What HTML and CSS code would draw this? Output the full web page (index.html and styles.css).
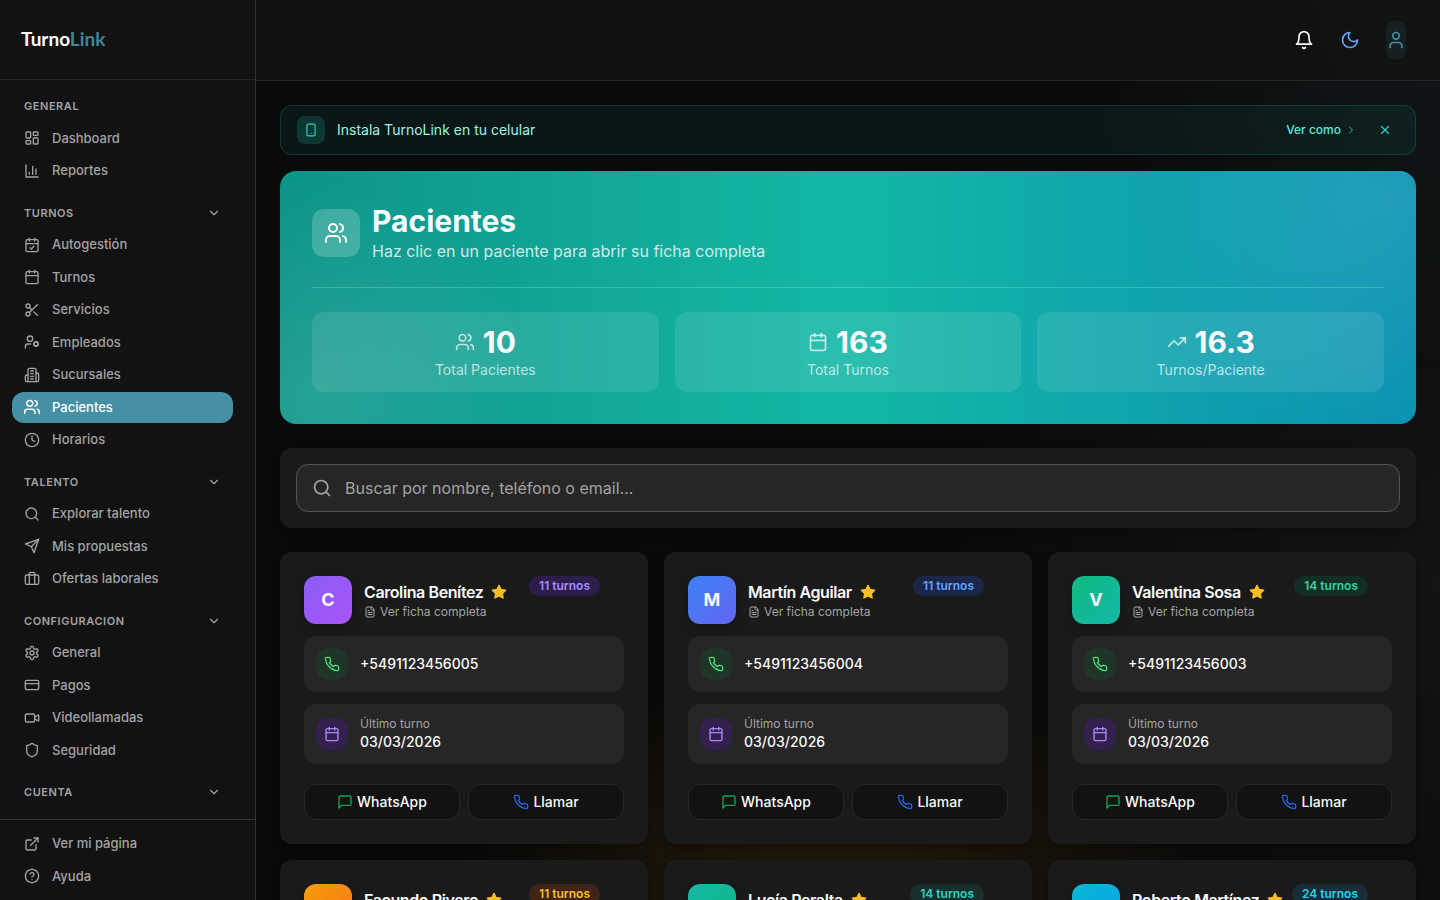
FILE: index.html
```html
<!DOCTYPE html>
<html lang="es">
<head>
  <meta charset="UTF-8">
  <meta name="viewport" content="width=device-width, initial-scale=1.0">
  <link rel="stylesheet" href="styles.css">
  <title>Pacientes - TurnoLink</title>
</head>
<body>
  <!-- Icon sprite -->
  <svg class="sprite" aria-hidden="true">
    <symbol id="dashboard" viewBox="0 0 24 24"><rect width="7" height="9" x="3" y="3" rx="1"/><rect width="7" height="5" x="14" y="3" rx="1"/><rect width="7" height="9" x="14" y="12" rx="1"/><rect width="7" height="5" x="3" y="16" rx="1"/></symbol>
    <symbol id="chart" viewBox="0 0 24 24"><path d="M3 3v18h18"/><path d="M18 17V9"/><path d="M13 17V5"/><path d="M8 17v-3"/></symbol>
    <symbol id="calendar" viewBox="0 0 24 24"><path d="M8 2v4"/><path d="M16 2v4"/><rect width="18" height="18" x="3" y="4" rx="2"/><path d="M3 10h18"/></symbol>
    <symbol id="calendar-check" viewBox="0 0 24 24"><path d="M8 2v4"/><path d="M16 2v4"/><rect width="18" height="18" x="3" y="4" rx="2"/><path d="M3 10h18"/><path d="m9 16 2 2 4-4"/></symbol>
    <symbol id="scissors" viewBox="0 0 24 24"><circle cx="6" cy="6" r="3"/><path d="M8.12 8.12 12 12"/><path d="M20 4 8.12 15.88"/><circle cx="6" cy="18" r="3"/><path d="M14.8 14.8 20 20"/></symbol>
    <symbol id="user-cog" viewBox="0 0 24 24"><circle cx="18" cy="15" r="3"/><circle cx="9" cy="7" r="4"/><path d="M10 15H6a4 4 0 0 0-4 4v2"/><path d="m21.7 16.4-.9-.3"/><path d="m15.2 13.9-.9-.3"/><path d="m16.6 18.7.3-.9"/><path d="m19.1 12.2.3-.9"/><path d="m19.6 18.7-.4-1"/><path d="m16.8 12.3-.4-1"/><path d="m14.3 16.6 1-.4"/><path d="m20.7 13.8 1-.4"/></symbol>
    <symbol id="building" viewBox="0 0 24 24"><path d="M6 22V4a2 2 0 0 1 2-2h8a2 2 0 0 1 2 2v18Z"/><path d="M6 12H4a2 2 0 0 0-2 2v6a2 2 0 0 0 2 2h2"/><path d="M18 9h2a2 2 0 0 1 2 2v9a2 2 0 0 1-2 2h-2"/><path d="M10 6h4"/><path d="M10 10h4"/><path d="M10 14h4"/><path d="M10 18h4"/></symbol>
    <symbol id="users" viewBox="0 0 24 24"><path d="M16 21v-2a4 4 0 0 0-4-4H6a4 4 0 0 0-4 4v2"/><circle cx="9" cy="7" r="4"/><path d="M22 21v-2a4 4 0 0 0-3-3.87"/><path d="M16 3.13a4 4 0 0 1 0 7.75"/></symbol>
    <symbol id="clock" viewBox="0 0 24 24"><circle cx="12" cy="12" r="10"/><path d="M12 6v6l4 2"/></symbol>
    <symbol id="search" viewBox="0 0 24 24"><circle cx="11" cy="11" r="8"/><path d="m21 21-4.3-4.3"/></symbol>
    <symbol id="send" viewBox="0 0 24 24"><path d="m22 2-7 20-4-9-9-4Z"/><path d="M22 2 11 13"/></symbol>
    <symbol id="briefcase" viewBox="0 0 24 24"><path d="M16 20V4a2 2 0 0 0-2-2h-4a2 2 0 0 0-2 2v16"/><rect width="20" height="14" x="2" y="6" rx="2"/></symbol>
    <symbol id="settings" viewBox="0 0 24 24"><path d="M12.22 2h-.44a2 2 0 0 0-2 2v.18a2 2 0 0 1-1 1.73l-.43.25a2 2 0 0 1-2 0l-.15-.08a2 2 0 0 0-2.73.73l-.22.38a2 2 0 0 0 .73 2.73l.15.1a2 2 0 0 1 1 1.72v.51a2 2 0 0 1-1 1.74l-.15.09a2 2 0 0 0-.73 2.73l.22.38a2 2 0 0 0 2.73.73l.15-.08a2 2 0 0 1 2 0l.43.25a2 2 0 0 1 1 1.73V20a2 2 0 0 0 2 2h.44a2 2 0 0 0 2-2v-.18a2 2 0 0 1 1-1.73l.43-.25a2 2 0 0 1 2 0l.15.08a2 2 0 0 0 2.73-.73l.22-.39a2 2 0 0 0-.73-2.73l-.15-.08a2 2 0 0 1-1-1.74v-.5a2 2 0 0 1 1-1.74l.15-.09a2 2 0 0 0 .73-2.73l-.22-.38a2 2 0 0 0-2.73-.73l-.15.08a2 2 0 0 1-2 0l-.43-.25a2 2 0 0 1-1-1.73V4a2 2 0 0 0-2-2z"/><circle cx="12" cy="12" r="3"/></symbol>
    <symbol id="card" viewBox="0 0 24 24"><rect width="20" height="14" x="2" y="5" rx="2"/><path d="M2 10h20"/></symbol>
    <symbol id="video" viewBox="0 0 24 24"><path d="m16 13 5.223 3.482a.5.5 0 0 0 .777-.416V7.87a.5.5 0 0 0-.752-.432L16 10.5"/><rect width="14" height="12" x="2" y="6" rx="2"/></symbol>
    <symbol id="shield" viewBox="0 0 24 24"><path d="M20 13c0 5-3.5 7.5-7.66 8.95a1 1 0 0 1-.67-.01C7.5 20.5 4 18 4 13V6a1 1 0 0 1 1-1c2 0 4.5-1.2 6.24-2.72a1.17 1.17 0 0 1 1.52 0C14.51 3.81 17 5 19 5a1 1 0 0 1 1 1z"/></symbol>
    <symbol id="external" viewBox="0 0 24 24"><path d="M15 3h6v6"/><path d="M10 14 21 3"/><path d="M18 13v6a2 2 0 0 1-2 2H5a2 2 0 0 1-2-2V8a2 2 0 0 1 2-2h6"/></symbol>
    <symbol id="help" viewBox="0 0 24 24"><circle cx="12" cy="12" r="10"/><path d="M9.09 9a3 3 0 0 1 5.83 1c0 2-3 3-3 3"/><path d="M12 17h.01"/></symbol>
    <symbol id="bell" viewBox="0 0 24 24"><path d="M6 8a6 6 0 0 1 12 0c0 7 3 9 3 9H3s3-2 3-9"/><path d="M10.3 21a1.94 1.94 0 0 0 3.4 0"/></symbol>
    <symbol id="moon" viewBox="0 0 24 24"><path d="M12 3a6 6 0 0 0 9 9 9 9 0 1 1-9-9Z"/></symbol>
    <symbol id="user" viewBox="0 0 24 24"><path d="M19 21v-2a4 4 0 0 0-4-4H9a4 4 0 0 0-4 4v2"/><circle cx="12" cy="7" r="4"/></symbol>
    <symbol id="smartphone" viewBox="0 0 24 24"><rect width="14" height="20" x="5" y="2" rx="2"/><path d="M12 18h.01"/></symbol>
    <symbol id="chevron-down" viewBox="0 0 24 24"><path d="m6 9 6 6 6-6"/></symbol>
    <symbol id="chevron-right" viewBox="0 0 24 24"><path d="m9 18 6-6-6-6"/></symbol>
    <symbol id="close" viewBox="0 0 24 24"><path d="M18 6 6 18"/><path d="m6 6 12 12"/></symbol>
    <symbol id="trending" viewBox="0 0 24 24"><path d="m22 7-8.5 8.5-5-5L2 17"/><path d="M16 7h6v6"/></symbol>
    <symbol id="file" viewBox="0 0 24 24"><path d="M15 2H6a2 2 0 0 0-2 2v16a2 2 0 0 0 2 2h12a2 2 0 0 0 2-2V7Z"/><path d="M14 2v4a2 2 0 0 0 2 2h4"/><path d="M10 9H8"/><path d="M16 13H8"/><path d="M16 17H8"/></symbol>
    <symbol id="phone" viewBox="0 0 24 24"><path d="M22 16.92v3a2 2 0 0 1-2.18 2 19.79 19.79 0 0 1-8.63-3.07 19.5 19.5 0 0 1-6-6 19.79 19.79 0 0 1-3.07-8.67A2 2 0 0 1 4.11 2h3a2 2 0 0 1 2 1.72 12.84 12.84 0 0 0 .7 2.81 2 2 0 0 1-.45 2.11L8.09 9.91a16 16 0 0 0 6 6l1.27-1.27a2 2 0 0 1 2.11-.45 12.84 12.84 0 0 0 2.81.7A2 2 0 0 1 22 16.92z"/></symbol>
    <symbol id="message" viewBox="0 0 24 24"><path d="M21 15a2 2 0 0 1-2 2H7l-4 4V5a2 2 0 0 1 2-2h14a2 2 0 0 1 2 2z"/></symbol>
    <symbol id="star" viewBox="0 0 24 24"><path d="m12 2 3.09 6.26L22 9.27l-5 4.87 1.18 6.88L12 17.77l-6.18 3.25L7 14.14 2 9.27l6.91-1.01L12 2z"/></symbol>
  </svg>

  <div class="app">
    <aside class="sidebar">
      <div class="brand">
        <a class="logo" href="#">Turno<span>Link</span></a>
      </div>
      <nav class="nav">
        <section class="nav-section">
          <h2 class="nav-title">General</h2>
          <a class="nav-item" href="#"><svg class="icon"><use href="#dashboard"/></svg>Dashboard</a>
          <a class="nav-item" href="#"><svg class="icon"><use href="#chart"/></svg>Reportes</a>
        </section>
        <section class="nav-section">
          <button class="nav-title" type="button">Turnos<svg class="icon icon-sm"><use href="#chevron-down"/></svg></button>
          <a class="nav-item" href="#"><svg class="icon"><use href="#calendar-check"/></svg>Autogestión</a>
          <a class="nav-item" href="#"><svg class="icon"><use href="#calendar"/></svg>Turnos</a>
          <a class="nav-item" href="#"><svg class="icon"><use href="#scissors"/></svg>Servicios</a>
          <a class="nav-item" href="#"><svg class="icon"><use href="#user-cog"/></svg>Empleados</a>
          <a class="nav-item" href="#"><svg class="icon"><use href="#building"/></svg>Sucursales</a>
          <a class="nav-item active" href="#"><svg class="icon"><use href="#users"/></svg>Pacientes</a>
          <a class="nav-item" href="#"><svg class="icon"><use href="#clock"/></svg>Horarios</a>
        </section>
        <section class="nav-section">
          <button class="nav-title" type="button">Talento<svg class="icon icon-sm"><use href="#chevron-down"/></svg></button>
          <a class="nav-item" href="#"><svg class="icon"><use href="#search"/></svg>Explorar talento</a>
          <a class="nav-item" href="#"><svg class="icon"><use href="#send"/></svg>Mis propuestas</a>
          <a class="nav-item" href="#"><svg class="icon"><use href="#briefcase"/></svg>Ofertas laborales</a>
        </section>
        <section class="nav-section">
          <button class="nav-title" type="button">Configuracion<svg class="icon icon-sm"><use href="#chevron-down"/></svg></button>
          <a class="nav-item" href="#"><svg class="icon"><use href="#settings"/></svg>General</a>
          <a class="nav-item" href="#"><svg class="icon"><use href="#card"/></svg>Pagos</a>
          <a class="nav-item" href="#"><svg class="icon"><use href="#video"/></svg>Videollamadas</a>
          <a class="nav-item" href="#"><svg class="icon"><use href="#shield"/></svg>Seguridad</a>
        </section>
        <section class="nav-section">
          <button class="nav-title" type="button">Cuenta<svg class="icon icon-sm"><use href="#chevron-down"/></svg></button>
        </section>
      </nav>
      <div class="sidebar-footer">
        <a class="nav-item" href="#"><svg class="icon"><use href="#external"/></svg>Ver mi página</a>
        <a class="nav-item" href="#"><svg class="icon"><use href="#help"/></svg>Ayuda</a>
      </div>
    </aside>

    <div class="page">
      <header class="topbar">
        <button class="icon-btn" type="button" aria-label="Notificaciones"><svg class="icon icon-lg"><use href="#bell"/></svg></button>
        <button class="icon-btn theme" type="button" aria-label="Tema"><svg class="icon icon-lg"><use href="#moon"/></svg></button>
        <button class="profile" type="button" aria-label="Perfil"><svg class="icon icon-lg"><use href="#user"/></svg></button>
      </header>

      <main class="content">
        <div class="install">
          <span class="install-icon"><svg class="icon icon-sm"><use href="#smartphone"/></svg></span>
          <p class="install-text">Instala TurnoLink en tu celular</p>
          <a class="install-link" href="#">Ver como<svg class="icon icon-xs"><use href="#chevron-right"/></svg></a>
          <button class="install-close" type="button" aria-label="Cerrar"><svg class="icon icon-sm"><use href="#close"/></svg></button>
        </div>

        <section class="hero">
          <div class="hero-head">
            <span class="hero-icon"><svg class="icon icon-xl"><use href="#users"/></svg></span>
            <div>
              <h1>Pacientes</h1>
              <p>Haz clic en un paciente para abrir su ficha completa</p>
            </div>
          </div>
          <div class="stats">
            <div class="stat">
              <div class="stat-value"><svg class="icon icon-lg"><use href="#users"/></svg>10</div>
              <div class="stat-label">Total Pacientes</div>
            </div>
            <div class="stat">
              <div class="stat-value"><svg class="icon icon-lg"><use href="#calendar"/></svg>163</div>
              <div class="stat-label">Total Turnos</div>
            </div>
            <div class="stat">
              <div class="stat-value"><svg class="icon icon-lg"><use href="#trending"/></svg>16.3</div>
              <div class="stat-label">Turnos/Paciente</div>
            </div>
          </div>
        </section>

        <div class="search-card">
          <label class="search">
            <svg class="icon icon-lg"><use href="#search"/></svg>
            <input type="text" placeholder="Buscar por nombre, teléfono o email..." aria-label="Buscar paciente">
          </label>
        </div>

        <div class="patients">
          <article class="patient violet">
            <div class="patient-head">
              <span class="avatar">C</span>
              <div class="patient-id">
                <h3>Carolina Benítez<svg class="star"><use href="#star"/></svg></h3>
                <p><svg class="icon icon-xs"><use href="#file"/></svg>Ver ficha completa</p>
              </div>
              <span class="badge">11 turnos</span>
            </div>
            <div class="info phone">
              <span class="info-icon"><svg class="icon"><use href="#phone"/></svg></span>
              <div class="info-value">+5491123456005</div>
            </div>
            <div class="info last">
              <span class="info-icon"><svg class="icon"><use href="#calendar"/></svg></span>
              <div>
                <div class="info-label">Último turno</div>
                <div class="info-value">03/03/2026</div>
              </div>
            </div>
            <div class="actions">
              <button class="btn whatsapp" type="button"><svg class="icon"><use href="#message"/></svg>WhatsApp</button>
              <button class="btn call" type="button"><svg class="icon"><use href="#phone"/></svg>Llamar</button>
            </div>
          </article>

          <article class="patient blue">
            <div class="patient-head">
              <span class="avatar">M</span>
              <div class="patient-id">
                <h3>Martín Aguilar<svg class="star"><use href="#star"/></svg></h3>
                <p><svg class="icon icon-xs"><use href="#file"/></svg>Ver ficha completa</p>
              </div>
              <span class="badge">11 turnos</span>
            </div>
            <div class="info phone">
              <span class="info-icon"><svg class="icon"><use href="#phone"/></svg></span>
              <div class="info-value">+5491123456004</div>
            </div>
            <div class="info last">
              <span class="info-icon"><svg class="icon"><use href="#calendar"/></svg></span>
              <div>
                <div class="info-label">Último turno</div>
                <div class="info-value">03/03/2026</div>
              </div>
            </div>
            <div class="actions">
              <button class="btn whatsapp" type="button"><svg class="icon"><use href="#message"/></svg>WhatsApp</button>
              <button class="btn call" type="button"><svg class="icon"><use href="#phone"/></svg>Llamar</button>
            </div>
          </article>

          <article class="patient emerald">
            <div class="patient-head">
              <span class="avatar">V</span>
              <div class="patient-id">
                <h3>Valentina Sosa<svg class="star"><use href="#star"/></svg></h3>
                <p><svg class="icon icon-xs"><use href="#file"/></svg>Ver ficha completa</p>
              </div>
              <span class="badge">14 turnos</span>
            </div>
            <div class="info phone">
              <span class="info-icon"><svg class="icon"><use href="#phone"/></svg></span>
              <div class="info-value">+5491123456003</div>
            </div>
            <div class="info last">
              <span class="info-icon"><svg class="icon"><use href="#calendar"/></svg></span>
              <div>
                <div class="info-label">Último turno</div>
                <div class="info-value">03/03/2026</div>
              </div>
            </div>
            <div class="actions">
              <button class="btn whatsapp" type="button"><svg class="icon"><use href="#message"/></svg>WhatsApp</button>
              <button class="btn call" type="button"><svg class="icon"><use href="#phone"/></svg>Llamar</button>
            </div>
          </article>

          <article class="patient amber">
            <div class="patient-head">
              <span class="avatar">F</span>
              <div class="patient-id">
                <h3>Facundo Rivero<svg class="star"><use href="#star"/></svg></h3>
              </div>
              <span class="badge">11 turnos</span>
            </div>
          </article>

          <article class="patient teal">
            <div class="patient-head">
              <span class="avatar">L</span>
              <div class="patient-id">
                <h3>Lucía Peralta<svg class="star"><use href="#star"/></svg></h3>
              </div>
              <span class="badge">14 turnos</span>
            </div>
          </article>

          <article class="patient cyan">
            <div class="patient-head">
              <span class="avatar">R</span>
              <div class="patient-id">
                <h3>Roberto Martínez<svg class="star"><use href="#star"/></svg></h3>
              </div>
              <span class="badge">24 turnos</span>
            </div>
          </article>
        </div>
      </main>
    </div>
  </div>
</body>
</html>
```

FILE: styles.css
```css
* {
  box-sizing: border-box;
}

body, h1, h2, h3, p {
  margin: 0;
}

body {
  background:
    radial-gradient(circle at 100% 0%, rgba(69, 144, 164, 0.1), transparent 360px),
    radial-gradient(ellipse 380px 240px at 58% 100%, rgba(245, 158, 11, 0.13), transparent),
    radial-gradient(circle at 100% 65%, rgba(255, 255, 255, 0.04), transparent 500px),
    #0a0a0a;
  color: #fafafa;
  font-family: Inter, "Liberation Sans", sans-serif;
  font-size: 14px;
  line-height: 20px;
}

a {
  color: inherit;
  text-decoration: none;
}

button, input {
  font: inherit;
  color: inherit;
  background: none;
  border: 0;
  padding: 0;
}

button {
  cursor: pointer;
}

.sprite {
  position: absolute;
  width: 0;
  height: 0;
}

.icon {
  flex: none;
  width: 16px;
  height: 16px;
  fill: none;
  stroke: currentColor;
  stroke-width: 2;
  stroke-linecap: round;
  stroke-linejoin: round;
}

.icon-xs { width: 12px; height: 12px; }
.icon-sm { width: 14px; height: 14px; }
.icon-lg { width: 20px; height: 20px; }
.icon-xl { width: 24px; height: 24px; }

.app {
  display: flex;
  height: 100vh;
}

/* Sidebar */
.sidebar {
  display: flex;
  flex-direction: column;
  flex: none;
  width: 256px;
  background: #121212;
  border-right: 1px solid #333;
}

.brand {
  display: flex;
  align-items: center;
  flex: none;
  height: 80px;
  padding: 0 21px 2px;
  border-bottom: 1px solid #262626;
}

.logo {
  font-family: Lato, sans-serif;
  font-size: 19px;
  font-weight: 700;
  color: #fff;
}

.logo span {
  color: #3f8796;
}

.nav {
  display: flex;
  flex-direction: column;
  flex: 1;
  gap: 14px;
  min-height: 0;
  padding: 14px 22px 0 12px;
  overflow: hidden;
}

.nav-section, .sidebar-footer {
  display: flex;
  flex-direction: column;
  flex: none;
  gap: 1px;
}

.nav-title {
  display: flex;
  align-items: center;
  justify-content: space-between;
  padding: 4px 12px;
  margin-bottom: 3px;
  color: #a3a3a3;
  font-size: 11px;
  font-weight: 600;
  line-height: 1.5;
  letter-spacing: 0.05em;
  text-transform: uppercase;
}

.nav-item {
  display: flex;
  align-items: center;
  gap: 12px;
  padding: 6px 12px;
  border-radius: 12px;
  color: #a3a3a3;
  font-size: 13px;
  font-weight: 500;
  line-height: 1.5;
}

.nav-item.active {
  background: #4590a4;
  color: #fff;
}

.nav-item.active .icon {
  transform: scale(1.1);
}

.sidebar-footer {
  padding: 8px 22px 8px 12px;
  border-top: 1px solid #333;
}

/* Page */
.page {
  display: flex;
  flex-direction: column;
  flex: 1;
  min-width: 0;
}

.topbar {
  display: flex;
  align-items: center;
  justify-content: flex-end;
  flex: none;
  gap: 6px;
  height: 81px;
  padding: 0 34px;
  background: rgba(18, 18, 18, 0.85);
  border-bottom: 1px solid #262626;
}

.icon-btn {
  display: grid;
  place-items: center;
  width: 40px;
  height: 40px;
}

.theme {
  color: #60a5fa;
}

.profile {
  display: grid;
  place-items: center;
  height: 40px;
  margin-left: 10px;
  border-radius: 12px;
  background: rgba(69, 144, 164, 0.1);
  color: #4590a4;
}

.content {
  flex: 1;
  min-height: 0;
  padding: 24px;
  overflow-y: auto;
  scrollbar-width: none;
}

/* Install banner */
.install {
  display: flex;
  align-items: center;
  gap: 12px;
  height: 50px;
  margin-bottom: 16px;
  padding: 0 16px;
  border: 1px solid rgba(20, 184, 166, 0.2);
  border-radius: 12px;
  background: rgba(20, 184, 166, 0.08);
}

.install-icon {
  display: grid;
  place-items: center;
  width: 28px;
  height: 28px;
  border-radius: 8px;
  background: rgba(20, 184, 166, 0.2);
  color: #2dd4bf;
}

.install-text {
  flex: 1;
  color: #99f6e4;
}

.install-link {
  display: flex;
  align-items: center;
  gap: 4px;
  margin-right: 2px;
  color: #5eead4;
  font-size: 12px;
  font-weight: 500;
}

.install-link .icon {
  opacity: 0.7;
}

.install-close {
  display: grid;
  place-items: center;
  width: 28px;
  height: 28px;
  color: #2dd4bf;
}

/* Hero */
.hero {
  margin-bottom: 24px;
  padding: 32px;
  border-radius: 16px;
  background:
    radial-gradient(circle at 97% 12%, rgba(255, 255, 255, 0.1), transparent 250px),
    radial-gradient(circle at 3% 90%, rgba(255, 255, 255, 0.1), transparent 220px),
    linear-gradient(to right, #0d9488, #14b8a6 50%, #0891b2);
}

.hero-head {
  display: flex;
  align-items: center;
  gap: 12px;
  margin-bottom: 24px;
}

.hero-icon {
  display: grid;
  place-items: center;
  width: 48px;
  height: 48px;
  border-radius: 12px;
  background: rgba(255, 255, 255, 0.2);
}

.hero h1 {
  font-size: 30px;
  font-weight: 700;
  line-height: 36px;
}

.hero-head p {
  color: rgba(255, 255, 255, 0.8);
  font-size: 16px;
  line-height: 24px;
}

.stats {
  display: grid;
  grid-template-columns: repeat(3, 1fr);
  gap: 16px;
  padding-top: 24px;
  border-top: 1px solid rgba(255, 255, 255, 0.2);
}

.stat {
  padding: 12px;
  border-radius: 12px;
  background: rgba(255, 255, 255, 0.1);
  text-align: center;
}

.stat-value {
  display: flex;
  align-items: center;
  justify-content: center;
  gap: 8px;
  font-size: 30px;
  font-weight: 700;
  line-height: 36px;
}

.stat-value .icon,
.stat-label {
  color: rgba(255, 255, 255, 0.7);
}

/* Search */
.search-card {
  margin-bottom: 24px;
  padding: 16px;
  border-radius: 12px;
  background: #1a1a1a;
  box-shadow: 0 4px 12px rgba(0, 0, 0, 0.3);
}

.search {
  display: flex;
  align-items: center;
  gap: 13px;
  height: 48px;
  padding: 0 15px;
  border: 1px solid #525252;
  border-radius: 12px;
  background: #262626;
  color: #a3a3a3;
}

.search input {
  flex: 1;
  font-size: 16px;
  line-height: 24px;
  outline: 0;
}

.search input::placeholder {
  color: #a3a3a3;
}

/* Patients */
.patients {
  display: grid;
  grid-template-columns: repeat(3, 1fr);
  gap: 16px;
}

.patient {
  padding: 24px;
  border-radius: 12px;
  background: #1a1a1a;
  box-shadow: 0 4px 12px rgba(0, 0, 0, 0.4);
}

.patient-head {
  display: flex;
  align-items: center;
  gap: 12px;
  margin-bottom: 12px;
  padding-right: 24px;
}

.avatar {
  display: grid;
  place-items: center;
  flex: none;
  width: 48px;
  height: 48px;
  border-radius: 12px;
  box-shadow: 0 4px 12px rgba(0, 0, 0, 0.25);
  font-size: 18px;
  font-weight: 700;
}

.patient-id {
  flex: 1;
  min-width: 0;
  min-height: 40px;
}

.patient h3 {
  display: flex;
  align-items: center;
  gap: 8px;
  font-size: 16px;
  font-weight: 600;
  line-height: 24px;
  letter-spacing: -0.025em;
  white-space: nowrap;
}

.star {
  flex: none;
  width: 16px;
  height: 16px;
  fill: #fbbf24;
  stroke: #fbbf24;
  stroke-width: 2;
  stroke-linejoin: round;
}

.patient-id p {
  display: flex;
  align-items: center;
  gap: 4px;
  color: #a3a3a3;
  font-size: 12px;
  line-height: 16px;
}

.badge {
  align-self: flex-start;
  flex: none;
  padding: 2px 10px;
  border-radius: 10px;
  font-size: 12px;
  font-weight: 600;
  line-height: 16px;
}

.violet .avatar { background: linear-gradient(to bottom right, #8b5cf6, #a855f7); }
.violet .badge { background: #2e1d4b; color: #a78bfa; }
.blue .avatar { background: linear-gradient(to bottom right, #3b82f6, #6366f1); }
.blue .badge { background: #1c2648; color: #60a5fa; }
.emerald .avatar { background: linear-gradient(to bottom right, #10b981, #14b8a6); }
.emerald .badge { background: #132e27; color: #34d399; }
.amber .avatar { background: linear-gradient(to bottom right, #f59e0b, #f97316); }
.amber .badge { background: #402315; color: #fbbf24; }
.teal .avatar { background: linear-gradient(to bottom right, #14b8a6, #10b981); }
.teal .badge { background: #182f2e; color: #2dd4bf; }
.cyan .avatar { background: linear-gradient(to bottom right, #06b6d4, #0ea5e9); }
.cyan .badge { background: #172d37; color: #22d3ee; }

.info {
  display: flex;
  align-items: center;
  gap: 12px;
  margin-bottom: 12px;
  padding: 12px;
  border-radius: 12px;
  background: #262626;
}

.info-icon {
  display: grid;
  place-items: center;
  width: 32px;
  height: 32px;
  border-radius: 12px;
}

.phone .info-icon {
  background: #1e3528;
  color: #4ade80;
}

.last .info-icon {
  background: #33204f;
  color: #a78bfa;
}

.info-label {
  color: #a3a3a3;
  font-size: 12px;
  line-height: 16px;
}

.info-value {
  font-weight: 500;
}

.actions {
  display: grid;
  grid-template-columns: 1fr 1fr;
  gap: 8px;
  padding-top: 8px;
}

.btn {
  display: flex;
  align-items: center;
  justify-content: center;
  gap: 4px;
  height: 36px;
  border: 1px solid #262626;
  border-radius: 12px;
  background: #121212;
  font-weight: 500;
}

.whatsapp .icon {
  color: #16a34a;
}

.call .icon {
  color: #2563eb;
}
```
